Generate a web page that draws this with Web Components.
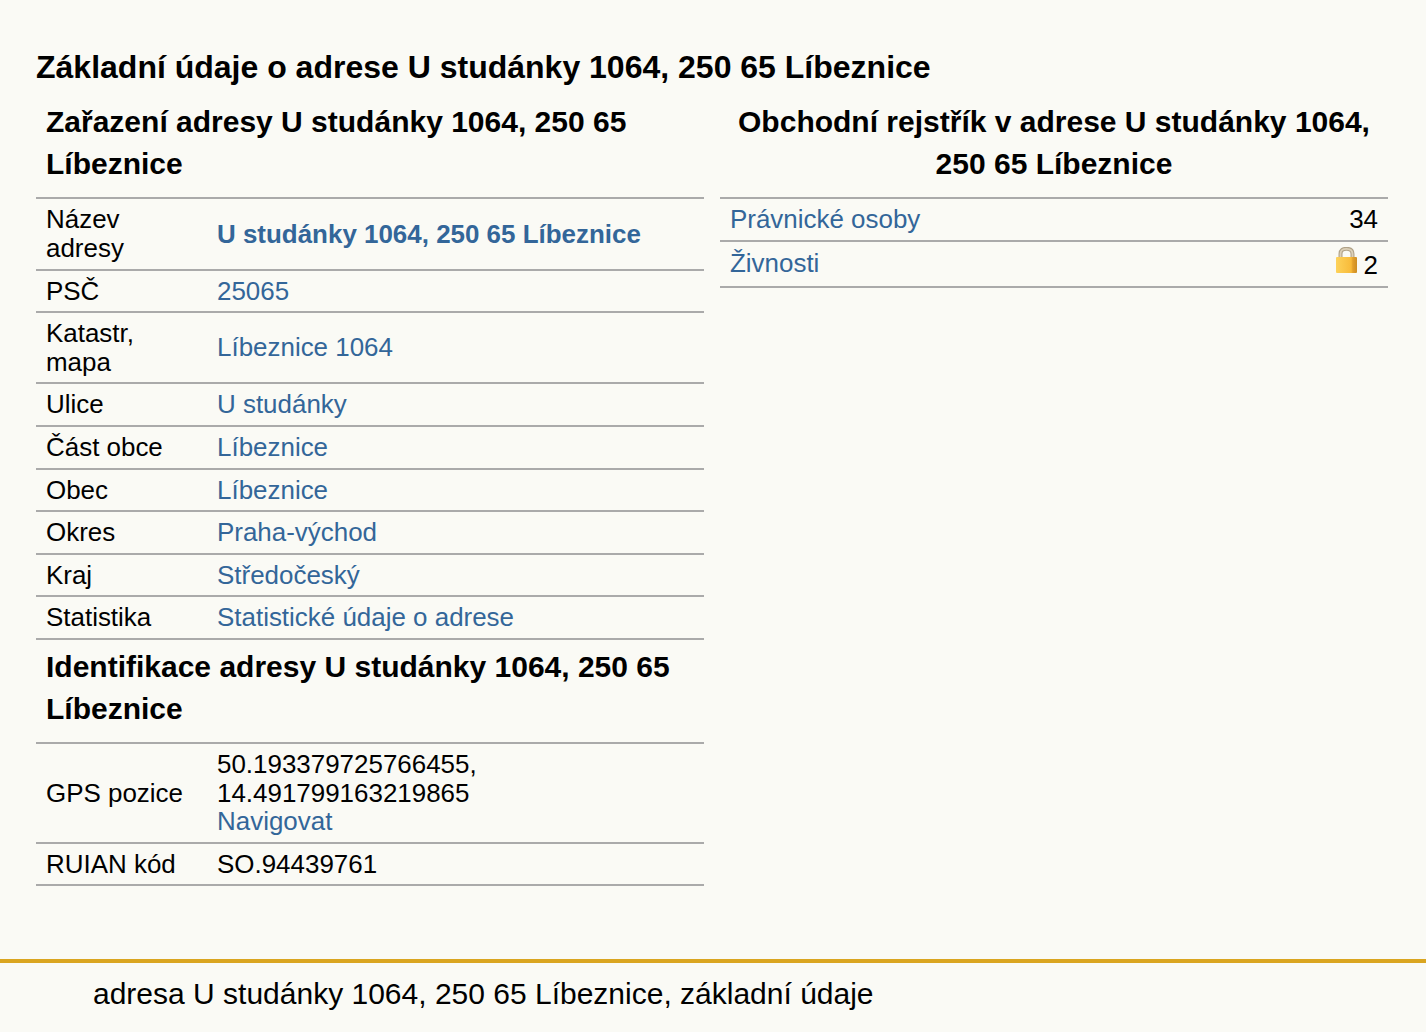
<!DOCTYPE html>
<html lang="cs">
<head>
<meta charset="utf-8">
<title>U studánky 1064, 250 65 Líbeznice</title>
<style>
    html, body { margin: 0; padding: 0; background: #fafaf5; }
    body { font-family: "Liberation Sans", Arial, sans-serif; color: #000; }
</style>
</head>
<body>
<address-page>
    <span slot="title">Základní údaje o adrese U studánky 1064, 250 65 Líbeznice</span>

    <addr-section slot="left" heading="Zařazení adresy U studánky 1064, 250 65 Líbeznice">
        <addr-row label="Název adresy"><addr-link strong>U studánky 1064, 250 65 Líbeznice</addr-link></addr-row>
        <addr-row label="PSČ"><addr-link>25065</addr-link></addr-row>
        <addr-row label="Katastr, mapa" style="--value-nudge: .3px"><addr-link>Líbeznice 1064</addr-link></addr-row>
        <addr-row label="Ulice"><addr-link>U studánky</addr-link></addr-row>
        <addr-row label="Část obce"><addr-link>Líbeznice</addr-link></addr-row>
        <addr-row label="Obec"><addr-link>Líbeznice</addr-link></addr-row>
        <addr-row label="Okres"><addr-link>Praha-východ</addr-link></addr-row>
        <addr-row label="Kraj"><addr-link>Středočeský</addr-link></addr-row>
        <addr-row label="Statistika"><addr-link>Statistické údaje o adrese</addr-link></addr-row>
    </addr-section>

    <addr-section slot="left" style="--head-bottom: 12.04px" heading="Identifikace adresy U studánky 1064, 250 65 Líbeznice">
        <addr-row label="GPS pozice">50.193379725766455, 14.491799163219865<br><addr-link>Navigovat</addr-link></addr-row>
        <addr-row label="RUIAN kód">SO.94439761</addr-row>
    </addr-section>

    <addr-section slot="right" centered heading="Obchodní rejstřík v adrese U studánky 1064, 250 65 Líbeznice">
        <count-row><addr-link slot="name">Právnické osoby</addr-link>34</count-row>
        <count-row style="--name-top: 1px; --value-up: 1px"><addr-link slot="name">Živnosti</addr-link><lock-icon></lock-icon> 2</count-row>
    </addr-section>

    <span slot="footer">adresa U studánky 1064, 250 65 Líbeznice, základní údaje</span>
</address-page>

<script>
class AddressPage extends HTMLElement {
    constructor() {
        super();
        this.attachShadow({mode: 'open'});
        this.shadowRoot.innerHTML = `
            <style>
                :host { display: block; }
                .main { padding: 49px 38px 0 36px; height: 959px; box-sizing: border-box; }
                h1 { margin: 0 0 8.5px; font-size: 32px; line-height: 37px; font-weight: bold; }
                .cols { display: grid; grid-template-columns: 668px 668px; column-gap: 16px; }
                footer {
                    border-top: 4px solid #daa520;
                    height: 73px;
                    box-sizing: border-box;
                    padding: 14px 0 0 93px;
                    font-size: 30px;
                    line-height: 34px;
                }
            </style>
            <div class="main">
                <h1><slot name="title"></slot></h1>
                <div class="cols">
                    <div><slot name="left"></slot></div>
                    <div><slot name="right"></slot></div>
                </div>
            </div>
            <footer><slot name="footer"></slot></footer>
        `;
    }
}

class AddrSection extends HTMLElement {
    constructor() {
        super();
        this.attachShadow({mode: 'open'});
        this.shadowRoot.innerHTML = `
            <style>
                :host { display: block; }
                h2 { margin: 0; padding: 6px 10px var(--head-bottom, 12.95px); font-size: 30px; line-height: 42px; font-weight: bold; }
                :host([centered]) h2 { text-align: center; }
                .rows { border-top: 2px solid #aaa; }
            </style>
            <h2></h2>
            <div class="rows"><slot></slot></div>
        `;
        this.shadowRoot.querySelector('h2').textContent = this.getAttribute('heading');
    }
}

class AddrRow extends HTMLElement {
    constructor() {
        super();
        this.attachShadow({mode: 'open'});
        this.shadowRoot.innerHTML = `
            <style>
                :host {
                    display: grid;
                    grid-template-columns: 151px 1fr;
                    column-gap: 20px;
                    align-items: center;
                    padding: 6px 10px;
                    border-bottom: 2px solid #aaa;
                    font-size: 25.95px;
                    line-height: 28.6px;
                }
                .value { margin-bottom: var(--value-nudge, 0); }
            </style>
            <div class="label"></div>
            <div class="value"><slot></slot></div>
        `;
        this.shadowRoot.querySelector('.label').textContent = this.getAttribute('label');
    }
}

class CountRow extends HTMLElement {
    constructor() {
        super();
        this.attachShadow({mode: 'open'});
        this.shadowRoot.innerHTML = `
            <style>
                :host {
                    display: flex;
                    justify-content: space-between;
                    align-items: flex-start;
                    padding: 6px 10px;
                    border-bottom: 2px solid #aaa;
                    font-size: 25.95px;
                    line-height: 28.6px;
                }
                ::slotted([slot="name"]) { margin-top: var(--name-top, 0); }
                .value { margin-top: calc(-1 * var(--value-up, 0px)); }
            </style>
            <slot name="name"></slot>
            <div class="value"><slot></slot></div>
        `;
    }
}

class AddrLink extends HTMLElement {
    constructor() {
        super();
        this.attachShadow({mode: 'open'});
        this.shadowRoot.innerHTML = `
            <style>
                :host { display: inline; color: #336699; }
                :host([strong]) { font-weight: bold; }
            </style>
            <slot></slot>
        `;
    }
}

class LockIcon extends HTMLElement {
    constructor() {
        super();
        this.attachShadow({mode: 'open'});
        this.shadowRoot.innerHTML = `
            <style>
                :host { display: inline-block; width: 21px; height: 26px; vertical-align: 1px; margin: 0 -1px 0 1px; }
                svg { display: block; }
            </style>
            <svg width="21" height="26" viewBox="0 0 21 26">
                <defs>
                    <linearGradient id="body" x1="0" x2="1" y1="0" y2="0">
                        <stop offset="0" stop-color="#fdd25a"/>
                        <stop offset="0.72" stop-color="#f8bb3a"/>
                        <stop offset="0.8" stop-color="#e2a02c"/>
                        <stop offset="1" stop-color="#cc8d24"/>
                    </linearGradient>
                </defs>
                <path d="M4.500 11V7C4.500 3 7 1.800 10.500 1.800S16.500 3 16.500 7V11" fill="none" stroke="#b0a288" stroke-width="4"/>
                <path d="M4.500 11V7C4.500 3 7 1.800 10.500 1.800S16.500 3 16.500 7V11" fill="none" stroke="#dcd0b8" stroke-width="1.800"/>
                <rect x="0" y="10" width="21" height="16" rx="1" fill="url(#body)"/>
            </svg>
        `;
    }
}

customElements.define('address-page', AddressPage);
customElements.define('addr-section', AddrSection);
customElements.define('addr-row', AddrRow);
customElements.define('count-row', CountRow);
customElements.define('addr-link', AddrLink);
customElements.define('lock-icon', LockIcon);
</script>
</body>
</html>
